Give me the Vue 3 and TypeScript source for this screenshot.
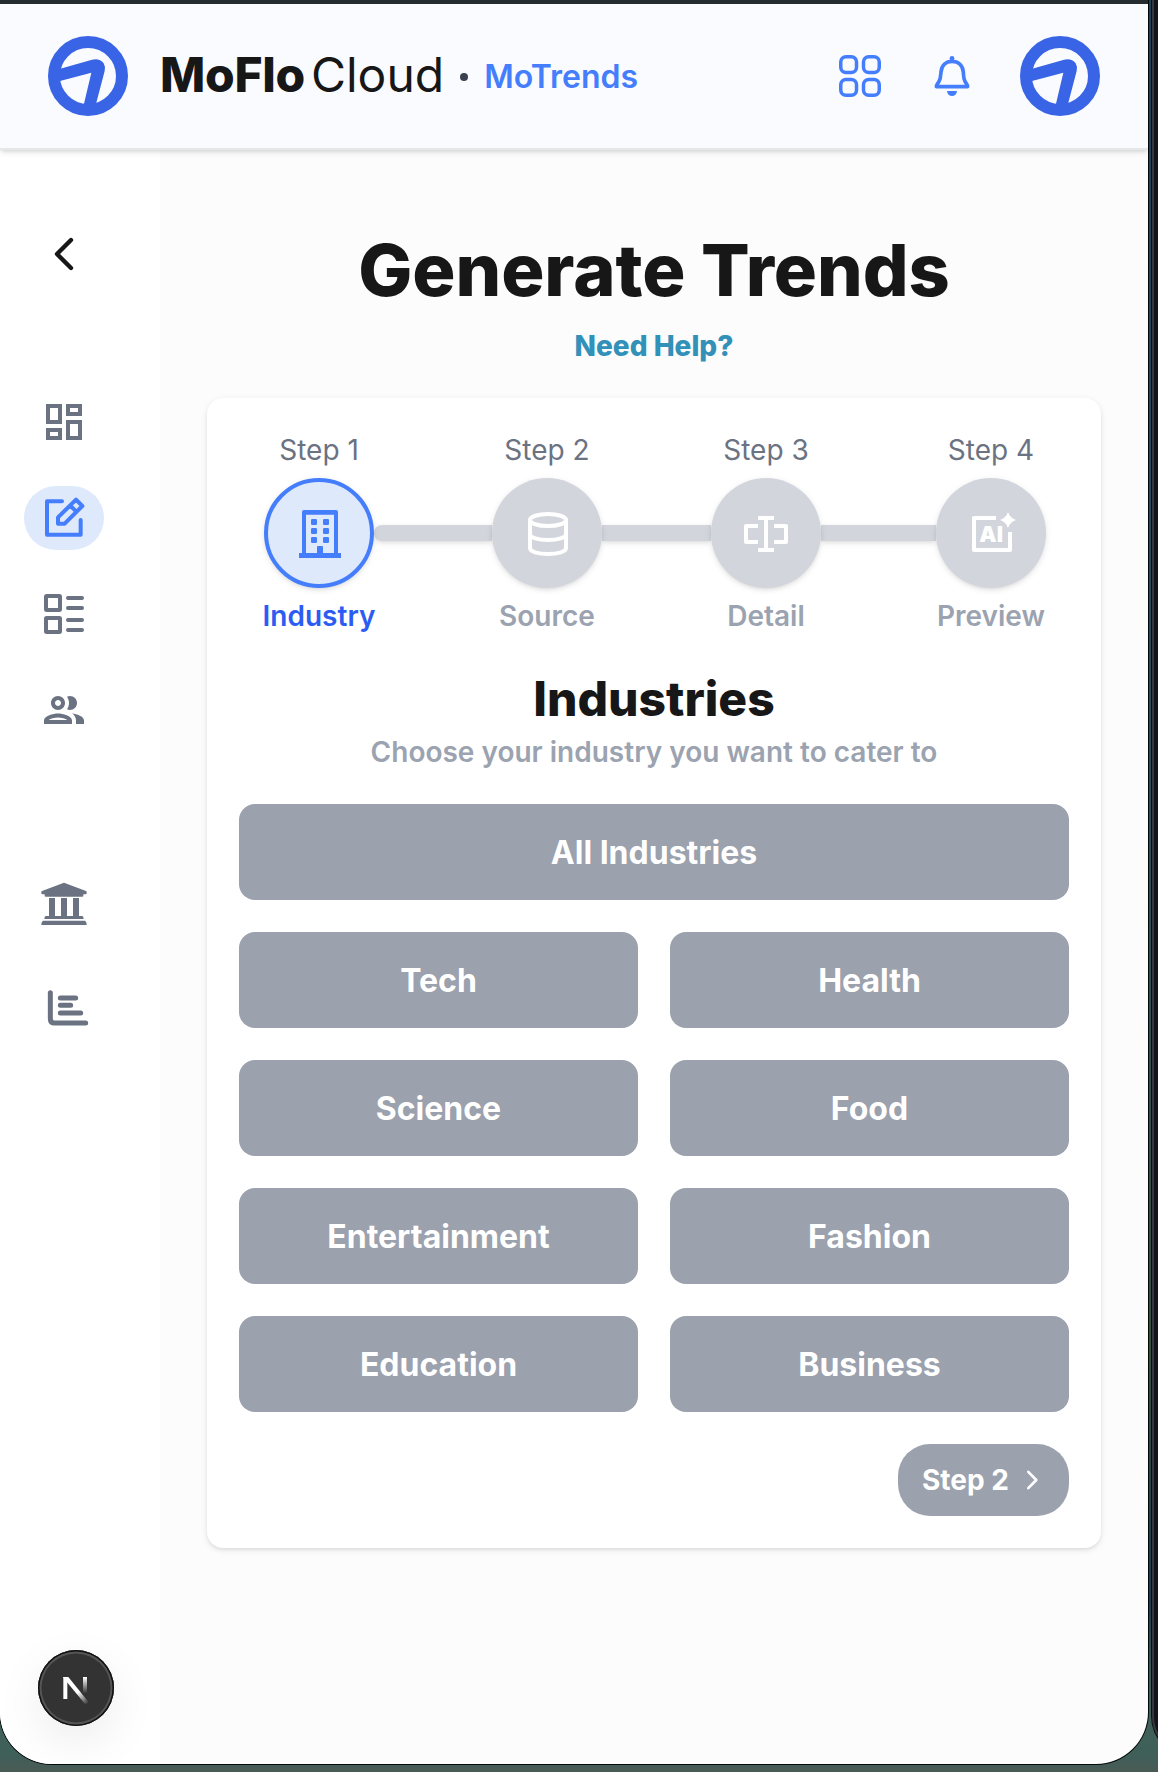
<script setup lang="ts">
interface Step {
  title: string
  label: string
  icon: 'building' | 'database' | 'field' | 'ai'
  gap: number
}

const steps: Step[] = [
  { title: 'Step 1', label: 'Industry', icon: 'building', gap: 118 },
  { title: 'Step 2', label: 'Source', icon: 'database', gap: 109 },
  { title: 'Step 3', label: 'Detail', icon: 'field', gap: 115 },
  { title: 'Step 4', label: 'Preview', icon: 'ai', gap: 0 },
]
const current = 0

const industries: string[] = [
  'Tech', 'Health', 'Science', 'Food', 'Entertainment', 'Fashion', 'Education', 'Business',
]

const logoArm =
  'M160 212L186 205L276 179Q299 174 311 190Q317 200 314 213L289 308L285 328H248L252 311L274 218L183 242L160 248Z'
</script>

<template>
  <div class="desktop">
    <div class="neighbour"></div>
    <div class="window">
      <div class="chrome"></div>
      <header class="header">
        <svg class="logo" viewBox="144 108 240 240">
          <circle cx="264" cy="228" r="102" />
          <path :d="logoArm" />
        </svg>
        <div class="brand">
          <span class="mo">MoFlo</span><span class="cloud">Cloud</span>
          <span class="dot"></span>
          <span class="product">MoTrends</span>
        </div>
        <div class="actions">
          <svg class="grid-icon" viewBox="0 0 24 24">
            <path d="M3.75 6A2.25 2.25 0 0 1 6 3.75h2.25A2.25 2.25 0 0 1 10.5 6v2.25a2.25 2.25 0 0 1-2.25 2.25H6a2.25 2.25 0 0 1-2.25-2.25V6ZM3.75 15.75A2.25 2.25 0 0 1 6 13.5h2.25a2.25 2.25 0 0 1 2.25 2.25V18a2.25 2.25 0 0 1-2.25 2.25H6A2.25 2.25 0 0 1 3.75 18v-2.25ZM13.5 6a2.25 2.25 0 0 1 2.25-2.25H18A2.25 2.25 0 0 1 20.25 6v2.25A2.25 2.25 0 0 1 18 10.5h-2.25a2.25 2.25 0 0 1-2.25-2.25V6ZM13.5 15.75a2.25 2.25 0 0 1 2.25-2.25H18a2.25 2.25 0 0 1 2.25 2.25V18A2.25 2.25 0 0 1 18 20.25h-2.25A2.25 2.25 0 0 1 13.5 18v-2.25Z" />
          </svg>
          <svg class="bell-icon" viewBox="372 144 168 168">
            <path d="M409 260H503C504 256 499 252 495 244C490 235 491 228 490 216C488 196 474 184 456 184C438 184 425 196 423 216C422 228 422 235 417 244C413 252 408 256 409 260Z" />
            <circle class="solid" cx="456" cy="175" r="7" />
            <path class="solid" d="M441 273H471C470 283 464 288 456 288S442 283 441 273Z" />
          </svg>
          <svg class="logo" viewBox="144 108 240 240">
            <circle cx="264" cy="228" r="102" />
            <path :d="logoArm" />
          </svg>
        </div>
      </header>

      <div class="body">
        <aside class="sidebar">
          <div class="slot back">
            <svg class="line" viewBox="120 30 144 144"><path d="M213 60L171 102L213 144" /></svg>
          </div>
          <nav class="nav">
            <div class="slot">
              <svg viewBox="0 0 24 24"><path d="M19 5v2h-4V5h4M9 5v6H5V5h4m10 8v6h-4v-6h4M9 17v2H5v-2h4M21 3h-8v6h8V3zM11 3H3v10h8V3zm10 8h-8v10h8V11zm-10 4H3v6h8v-6z" /></svg>
            </div>
            <div class="slot active">
              <svg class="line" viewBox="120 822 144 144">
                <path d="M186 844H141V944H242V900" />
                <path d="M174 911V892L228 839L247 858L194 911ZM211 857L229 875" />
              </svg>
            </div>
            <div class="slot">
              <svg class="line" viewBox="120 1110 144 144">
                <rect x="138" y="1128" width="42" height="42" rx="2" />
                <rect x="138" y="1194" width="42" height="42" rx="2" />
                <path d="M204 1134H246M204 1164H246M204 1200H246M204 1230H246" />
              </svg>
            </div>
            <div class="slot">
              <svg viewBox="0 0 24 24"><path d="M9 13.75c-2.34 0-7 1.17-7 3.5V19h14v-1.75c0-2.33-4.66-3.5-7-3.5zM4.34 17c.84-.58 2.87-1.25 4.66-1.25s3.82.67 4.66 1.25H4.34zM9 12c1.93 0 3.5-1.57 3.5-3.5S10.93 5 9 5 5.5 6.57 5.5 8.5 7.07 12 9 12zm0-5c.83 0 1.5.67 1.5 1.5S9.83 10 9 10s-1.5-.67-1.5-1.5S8.17 7 9 7zm7.04 6.81c1.16.84 1.96 1.96 1.96 3.44V19h4v-1.75c0-2.02-3.5-3.17-5.96-3.44zM15 12c1.93 0 3.5-1.57 3.5-3.5S16.93 5 15 5c-.54 0-1.04.13-1.5.35.63.89 1 1.98 1 3.15s-.37 2.26-1 3.15c.46.22.96.35 1.5.35z" /></svg>
            </div>
          </nav>
          <div class="extra">
            <div class="slot">
              <svg viewBox="120 120 144 144">
                <path d="M190 129Q192 128 194 129L258 153Q260 154 260 156V160Q260 163 257 163H250V167Q250 170 247 170H137Q134 170 134 167V163H127Q124 163 124 160V156Q124 154 126 153Z" />
                <path d="M147 174H165V228H183V174H201V228H219V174H237V228H247Q251 229 251 237H133Q133 229 137 228H147ZM130 242H254Q260 244 260 255H124Q124 244 130 242Z" />
              </svg>
            </div>
            <div class="slot">
              <svg class="line chart" viewBox="120 432 144 144">
                <path d="M151 458V536Q151 549 164 549H257M181 474H227M181 496H212M181 519H242" />
              </svg>
            </div>
          </div>
        </aside>

        <main class="main">
          <h1 class="title">Generate Trends</h1>
          <a class="help">Need Help?</a>
          <section class="card">
            <div class="steps">
              <template v-for="(step, i) in steps" :key="step.title">
                <div class="step" :class="{ on: i === current }">
                  <span class="step-title">{{ step.title }}</span>
                  <div class="circle">
                    <svg v-if="step.icon === 'building'" viewBox="315 387 144 144">
                      <path fill-rule="evenodd" d="M342 390H438Q444 390 444 396V519H453V534H327V519H336V396Q336 390 342 390ZM348 404V519H381V501Q381 498 384 498H396Q399 498 399 501V519H432V404Z" />
                      <g>
                        <rect x="363" y="417" width="18" height="18" rx="4" /><rect x="399" y="417" width="18" height="18" rx="4" />
                        <rect x="363" y="444" width="18" height="18" rx="4" /><rect x="399" y="444" width="18" height="18" rx="4" />
                        <rect x="363" y="471" width="18" height="18" rx="4" /><rect x="399" y="471" width="18" height="18" rx="4" />
                      </g>
                    </svg>
                    <svg v-else-if="step.icon === 'database'" class="line" viewBox="999 387 144 144">
                      <ellipse cx="1074" cy="420" rx="54" ry="18" />
                      <path d="M1020 420V504C1020 515 1044 522 1074 522S1128 515 1128 504V420M1020 462C1020 473 1044 480 1074 480S1128 473 1128 462" />
                    </svg>
                    <svg v-else-if="step.icon === 'field'" viewBox="276 387 144 144">
                      <path d="M324 408H372V420H354V504H372V516H324V504H342V420H324ZM324 432V444H294V480H324V492H288Q282 492 282 486V438Q282 432 288 432ZM372 432H408Q414 432 414 438V486Q414 492 408 492H372V480H402V444H372Z" />
                    </svg>
                    <svg v-else viewBox="951 387 144 144">
                      <path d="M1038 408V420H978V504H1074V456H1086V510Q1086 516 1080 516H972Q966 516 966 510V414Q966 408 972 408ZM1074 396Q1080 414 1098 420Q1080 426 1074 444Q1068 426 1050 420Q1068 414 1074 396Z" />
                      <text x="988" y="486" textLength="71" lengthAdjust="spacingAndGlyphs">AI</text>
                    </svg>
                  </div>
                  <span class="step-label">{{ step.label }}</span>
                </div>
                <div v-if="step.gap" class="connector" :class="{ first: i === 0 }" :style="{ width: step.gap + 'px' }"></div>
              </template>
            </div>

            <h2 class="subtitle">Industries</h2>
            <p class="hint">Choose your industry you want to cater to</p>
            <div class="choices">
              <button class="choice wide">All Industries</button>
              <button v-for="name in industries" :key="name" class="choice">{{ name }}</button>
            </div>
            <button class="next">
              <span>Step 2</span>
              <svg viewBox="0 0 24 24"><path d="M8.3 3.8L16.3 12L8.3 20.2" /></svg>
            </button>
          </section>
        </main>
      </div>

      <div class="badge">
        <svg viewBox="114 180 228 228">
          <defs>
            <linearGradient id="diag" gradientUnits="userSpaceOnUse" x1="232" y1="308" x2="262" y2="343">
              <stop offset="0" stop-color="#fff" /><stop offset="1" stop-color="#fff" stop-opacity="0" />
            </linearGradient>
            <linearGradient id="stem" gradientUnits="userSpaceOnUse" x1="0" y1="262" x2="0" y2="310">
              <stop offset="0" stop-color="#fff" /><stop offset="1" stop-color="#fff" stop-opacity="0" />
            </linearGradient>
          </defs>
          <path fill="#fff" d="M190 261H202V327H190Z" />
          <path fill="url(#diag)" d="M190 261H205L266 337L257 344L190 263Z" />
          <path fill="url(#stem)" d="M249 261H261V310H249Z" />
        </svg>
      </div>
    </div>
  </div>
</template>

<style>
body {
  margin: 0;
}
</style>

<style scoped>
.desktop {
  position: relative;
  width: 1158px;
  height: 1772px;
  overflow: hidden;
  background: linear-gradient(180deg, #1f3f58 0, #27485f 480px, #2f4d58 900px, #38503f 1350px, #1d3a52 1600px, #41605a 1690px, #3f5f59 1755px, #4a5a55 1772px);
  font-family: Inter, "Liberation Sans", sans-serif;
  color: #171717;
}
.neighbour {
  position: absolute;
  left: 1152px;
  top: -20px;
  width: 60px;
  height: 1776px;
  box-sizing: border-box;
  border: 2px solid #37383d;
  border-radius: 0 0 0 40px;
  background: #11141c;
  box-shadow: 0 0 0 1px #0b0d10;
}
.window {
  position: relative;
  width: 1148px;
  height: 1764px;
  overflow: hidden;
  border-radius: 0 0 52px 52px;
  background: #fcfcfc;
  display: flex;
  flex-direction: column;
  box-shadow: 0 0 0 1px #050808;
}
.chrome {
  flex: none;
  height: 4px;
  background: #262d31;
}
.header {
  flex: none;
  box-sizing: border-box;
  height: 146px;
  padding: 0 48px;
  display: flex;
  align-items: center;
  background: #fafbff;
  border-bottom: 2px solid #e5e7eb;
  box-shadow: 0 2px 6px rgba(0, 0, 0, 0.12), 0 2px 4px -2px rgba(0, 0, 0, 0.12);
  position: relative;
  z-index: 1;
}
.logo {
  width: 80px;
  height: 80px;
  flex: none;
}
.logo circle {
  fill: none;
  stroke: #3964e6;
  stroke-width: 36;
}
.logo path {
  fill: #3964e6;
}
.brand {
  margin-left: 32px;
  display: flex;
  align-items: center;
  font-size: 48px;
  line-height: 60px;
}
.mo,
.cloud {
  position: relative;
  top: -1px;
}
.mo {
  font-weight: 800;
  letter-spacing: -0.3px;
}
.cloud {
  font-weight: 400;
  margin-left: 6px;
}
.dot {
  width: 8px;
  height: 8px;
  margin: 2px 16px 0 16px;
  border-radius: 50%;
  background: #3a4252;
}
.product {
  font-size: 32px;
  font-weight: 600;
  color: #447efc;
  line-height: 40px;
  margin-top: 2px;
}
.actions {
  margin-left: auto;
  display: flex;
  align-items: center;
}
.grid-icon,
.bell-icon {
  width: 56px;
  height: 56px;
  fill: none;
  stroke: #447efc;
  stroke-width: 1.5;
}
.bell-icon {
  margin: 0 40px 0 36px;
  stroke-width: 11;
  stroke-linejoin: round;
}
.bell-icon .solid {
  fill: #447efc;
  stroke: none;
}
.body {
  flex: 1;
  display: flex;
  min-height: 0;
}
.sidebar {
  flex: none;
  box-sizing: border-box;
  width: 160px;
  padding: 72px 0 0 24px;
  background: #fff;
}
.slot {
  width: 80px;
  height: 64px;
  border-radius: 32px;
  display: flex;
  align-items: center;
  justify-content: center;
  color: #6b7282;
}
.slot svg,
.circle svg {
  width: 48px;
  height: 48px;
  overflow: visible;
  fill: currentColor;
}
.slot svg.line,
.circle svg.line {
  fill: none;
  stroke: currentColor;
  stroke-width: 12;
  stroke-linecap: round;
  stroke-linejoin: round;
}
.slot svg.chart {
  stroke-width: 15;
}
.slot.back {
  color: #171717;
}
.slot.back svg.line {
  stroke-width: 13;
}
.slot.active {
  background: #dee9fc;
  color: #447efc;
}
.nav {
  margin-top: 104px;
  display: flex;
  flex-direction: column;
  gap: 32px;
}
.extra {
  margin-top: 130px;
  display: flex;
  flex-direction: column;
  gap: 40px;
}
.main {
  flex: 1;
  padding: 80px 47px 0;
  display: flex;
  flex-direction: column;
  align-items: center;
}
.title {
  margin: 0;
  font-size: 72px;
  line-height: 80px;
  font-weight: 800;
  letter-spacing: -0.05px;
}
.help {
  margin-top: 16px;
  font-size: 28px;
  line-height: 40px;
  font-weight: 800;
  color: #3291b8;
}
.card {
  margin-top: 32px;
  box-sizing: border-box;
  width: 894px;
  height: 1150px;
  padding: 32px;
  border-radius: 16px;
  background: #fff;
  box-shadow: 0 2px 6px rgba(0, 0, 0, 0.1), 0 2px 4px -2px rgba(0, 0, 0, 0.1);
  display: flex;
  flex-direction: column;
  align-items: center;
}
.steps {
  display: flex;
  align-self: flex-start;
  margin-left: 25px;
}
.step {
  width: 110px;
  display: flex;
  flex-direction: column;
  align-items: center;
}
.step-title,
.step-label {
  font-size: 28px;
  line-height: 40px;
  white-space: nowrap;
}
.step-title {
  color: #6b7282;
}
.step-label {
  margin-top: 8px;
  font-weight: 600;
  color: #9ca3b0;
}
.on .step-label {
  color: #2d5cf3;
}
.circle {
  position: relative;
  z-index: 1;
  box-sizing: border-box;
  width: 110px;
  height: 110px;
  margin-top: 8px;
  border-radius: 50%;
  background: #d2d5dc;
  color: #fff;
  display: flex;
  align-items: center;
  justify-content: center;
  box-shadow: 0 2px 6px rgba(0, 0, 0, 0.1), 0 2px 4px -2px rgba(0, 0, 0, 0.1);
}
.on .circle {
  background: #dee9fc;
  border: 4px solid #447efc;
  color: #447efc;
}
.circle text {
  font-size: 66px;
  font-weight: 900;
}
.connector {
  height: 16px;
  margin-top: 95px;
  background: #d2d5dc;
  box-shadow: 0 2px 6px rgba(0, 0, 0, 0.1), 0 2px 4px -2px rgba(0, 0, 0, 0.1);
}
.connector.first {
  border-radius: 8px 0 0 8px;
}
.subtitle {
  margin: 31px 0 0;
  font-size: 48px;
  line-height: 64px;
  font-weight: 800;
}
.hint {
  margin: 1px 0 0;
  font-size: 28px;
  line-height: 40px;
  font-weight: 600;
  color: #9ca3b0;
}
.choices {
  width: 100%;
  margin-top: 32px;
  display: grid;
  grid-template-columns: 1fr 1fr;
  gap: 32px;
}
.choice,
.next {
  flex: none;
  border: 0;
  font-family: inherit;
  color: #fff;
  background: #9ba1ad;
}
.choice {
  height: 96px;
  padding: 0;
  border-radius: 16px;
  font-size: 32px;
  font-weight: 700;
}
.wide {
  grid-column: span 2;
}
.next {
  align-self: flex-end;
  box-sizing: border-box;
  width: 171px;
  height: 72px;
  margin-top: 32px;
  padding: 0 0 0 24px;
  border-radius: 32px;
  display: flex;
  align-items: center;
  font-size: 28px;
  font-weight: 700;
}
.next svg {
  width: 24px;
  height: 24px;
  margin-left: 11px;
  fill: none;
  stroke: #fff;
  stroke-width: 2.6;
  stroke-linecap: round;
  stroke-linejoin: round;
}
.badge {
  position: absolute;
  left: 38px;
  top: 1650px;
  width: 76px;
  height: 76px;
  border-radius: 50%;
  background: #333;
  box-shadow: inset 0 0 0 1.5px #111, inset 0 0 0 3.5px #555, 0 16px 48px rgba(0, 0, 0, 0.08);
}
.badge svg {
  display: block;
  width: 76px;
  height: 76px;
}
</style>
